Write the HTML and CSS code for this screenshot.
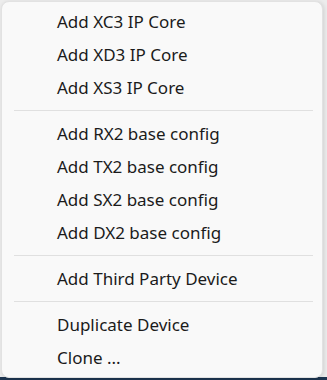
FILE: index.html
```html
<html>
	<head>
		<meta charset="UTF-8">
		<title>Context Menu</title>
		<link rel="stylesheet" href="styles.css">
	</head>
	<body>
		<div id="Menu">
			<div class="item">Add XC3 IP Core</div>
			<div class="item">Add XD3 IP Core</div>
			<div class="item">Add XS3 IP Core</div>
			<div class="sep"></div>
			<div class="item">Add RX2 base config</div>
			<div class="item">Add TX2 base config</div>
			<div class="item">Add SX2 base config</div>
			<div class="item">Add DX2 base config</div>
			<div class="sep"></div>
			<div class="item">Add Third Party Device</div>
			<div class="sep"></div>
			<div class="item">Duplicate Device</div>
			<div class="item">Clone ...</div>
		</div>
	</body>
</html>
```

FILE: styles.css
```css
*{
	margin: 0;
	padding: 0;
	box-sizing: border-box;
}
html, body{
	width: 327px;
	height: 380px;
	overflow: hidden;
}
body{
	background: linear-gradient(to bottom, #ececec 377px, #1d3550 377px);
	font-family: "Noto Sans", "Open Sans", sans-serif;
}
#Menu{
	margin: 1px 4px 0 1px;
	height: 377px;
	padding: 3px 0 0 0;
	background: #f9f9f9;
	border: 1px solid #e2e2e2;
	border-radius: 8px;
	box-shadow: 1px 1px 4px rgba(0,0,0,0.12);
}
#Menu .item{
	height: 33px;
	line-height: 33px;
	padding-left: 55px;
	font-size: 17px;
	color: #1b1b1b;
	white-space: nowrap;
}
#Menu .sep{
	height: 1px;
	margin: 6px 9px 6px 12px;
	background: #e0e0e0;
}
```
